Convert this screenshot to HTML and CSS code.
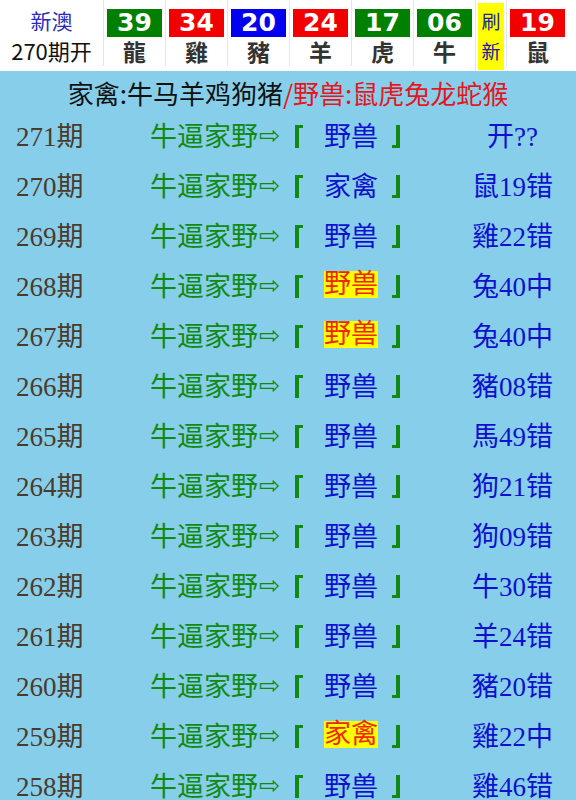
FILE: index.html
```html
<!DOCTYPE html>
<html lang="zh">
<head>
    <meta charset="UTF-8">
    <meta name="viewport" content="width=device-width, initial-scale=1.0">
    <title>新澳 家野</title>
    <link rel="stylesheet" href="styles.css">
</head>
<body>
    <div class="top">
        <div class="lead">
            <div class="lead-name">新澳</div>
            <div class="lead-issue">270期开</div>
        </div>
        <div class="cell"><div class="ball green">39</div><div class="zodiac">龍</div></div>
        <div class="cell"><div class="ball red">34</div><div class="zodiac">雞</div></div>
        <div class="cell"><div class="ball blue">20</div><div class="zodiac">豬</div></div>
        <div class="cell"><div class="ball red">24</div><div class="zodiac">羊</div></div>
        <div class="cell"><div class="ball green">17</div><div class="zodiac">虎</div></div>
        <div class="cell"><div class="ball green">06</div><div class="zodiac">牛</div></div>
        <div class="refresh"><span>刷新</span></div>
        <div class="cell"><div class="ball red">19</div><div class="zodiac">鼠</div></div>
    </div>

    <div class="board">
        <div class="legend">家禽:牛马羊鸡狗猪<span class="wild">/野兽:鼠虎兔龙蛇猴</span></div>

        <div class="row"><span class="period">271期</span><span class="pick">牛逼家野<i class="arrow">⇨</i><i class="lb"></i><b>野兽</b><i class="rb"></i></span><span class="result">开??</span></div>
        <div class="row"><span class="period">270期</span><span class="pick">牛逼家野<i class="arrow">⇨</i><i class="lb"></i><b>家禽</b><i class="rb"></i></span><span class="result">鼠19错</span></div>
        <div class="row"><span class="period">269期</span><span class="pick">牛逼家野<i class="arrow">⇨</i><i class="lb"></i><b>野兽</b><i class="rb"></i></span><span class="result">雞22错</span></div>
        <div class="row"><span class="period">268期</span><span class="pick">牛逼家野<i class="arrow">⇨</i><i class="lb"></i><b class="hit">野兽</b><i class="rb"></i></span><span class="result">兔40中</span></div>
        <div class="row"><span class="period">267期</span><span class="pick">牛逼家野<i class="arrow">⇨</i><i class="lb"></i><b class="hit">野兽</b><i class="rb"></i></span><span class="result">兔40中</span></div>
        <div class="row"><span class="period">266期</span><span class="pick">牛逼家野<i class="arrow">⇨</i><i class="lb"></i><b>野兽</b><i class="rb"></i></span><span class="result">豬08错</span></div>
        <div class="row"><span class="period">265期</span><span class="pick">牛逼家野<i class="arrow">⇨</i><i class="lb"></i><b>野兽</b><i class="rb"></i></span><span class="result">馬49错</span></div>
        <div class="row"><span class="period">264期</span><span class="pick">牛逼家野<i class="arrow">⇨</i><i class="lb"></i><b>野兽</b><i class="rb"></i></span><span class="result">狗21错</span></div>
        <div class="row"><span class="period">263期</span><span class="pick">牛逼家野<i class="arrow">⇨</i><i class="lb"></i><b>野兽</b><i class="rb"></i></span><span class="result">狗09错</span></div>
        <div class="row"><span class="period">262期</span><span class="pick">牛逼家野<i class="arrow">⇨</i><i class="lb"></i><b>野兽</b><i class="rb"></i></span><span class="result">牛30错</span></div>
        <div class="row"><span class="period">261期</span><span class="pick">牛逼家野<i class="arrow">⇨</i><i class="lb"></i><b>野兽</b><i class="rb"></i></span><span class="result">羊24错</span></div>
        <div class="row"><span class="period">260期</span><span class="pick">牛逼家野<i class="arrow">⇨</i><i class="lb"></i><b>野兽</b><i class="rb"></i></span><span class="result">豬20错</span></div>
        <div class="row"><span class="period">259期</span><span class="pick">牛逼家野<i class="arrow">⇨</i><i class="lb"></i><b class="hit">家禽</b><i class="rb"></i></span><span class="result">雞22中</span></div>
        <div class="row"><span class="period">258期</span><span class="pick">牛逼家野<i class="arrow">⇨</i><i class="lb"></i><b>野兽</b><i class="rb"></i></span><span class="result">雞46错</span></div>
    </div>
</body>
</html>
```

FILE: styles.css
```css
body {
    margin: 0;
    background: #87ceeb;
    font-family: "Noto Sans CJK SC", sans-serif;
}
.top {
    display: flex;
    background: #fff;
    height: 71px;
}
.lead {
    width: 103px;
    padding-top: 6px;
    text-align: center;
}
.lead-name {
    color: #2a2ac0;
    font-size: 21px;
    line-height: 29px;
}
.lead-issue {
    color: #111;
    font-size: 22px;
    line-height: 30px;
}
.cell {
    width: 55px;
    padding: 9px 3px 0;
    border-left: 1px solid #e6e6e6;
    height: 57px;
}
.ball {
    height: 28px;
    line-height: 28px;
    color: #fff;
    font-family: "DejaVu Sans", sans-serif;
    font-weight: bold;
    font-size: 25px;
    text-align: center;
}
.green { background: #008000; }
.red { background: #f20000; }
.blue { background: #0000f0; }
.zodiac {
    height: 28px;
    line-height: 28px;
    text-align: center;
    color: #333;
    font-size: 23px;
    font-weight: bold;
}
.refresh {
    width: 30px;
    display: flex;
    justify-content: center;
    border-left: 1px solid #e6e6e6;
}
.refresh span {
    width: 26px;
    height: 67px;
    margin-top: 3px;
    background: #ffff00;
    color: #2020a0;
    font-size: 19px;
    line-height: 30px;
    text-align: center;
    padding-top: 3px;
    box-sizing: border-box;
}
.legend {
    text-align: center;
    font-size: 26px;
    color: #111;
    height: 38px;
    line-height: 44px;
}
.legend .wild {
    color: #e5161c;
}
.row {
    display: flex;
    align-items: center;
    height: 50px;
    font-family: "Liberation Serif", "Noto Sans CJK SC", serif;
    font-size: 27px;
}
.period {
    width: 150px;
    padding-left: 16px;
    box-sizing: border-box;
    color: #4b3b2b;
}
.pick {
    width: 322px;
    display: flex;
    align-items: center;
    color: #128a12;
}
.pick .arrow {
    font-style: normal;
    font-family: "DejaVu Sans", sans-serif;
    font-size: 25px;
    margin: 3px 0 0 1px;
}
.pick .lb,
.pick .rb {
    width: 4px;
    height: 20px;
    margin-top: 4px;
    border: 0 solid #128a12;
}
.pick .lb {
    border-left-width: 4px;
    border-top-width: 3px;
    margin-left: 15px;
}
.pick .rb {
    border-right-width: 4px;
    border-bottom-width: 3px;
    margin-left: 14px;
}
.pick b {
    font-weight: normal;
    color: #1010d0;
    margin-left: 21px;
}
.pick b.hit {
    background: #ffff00;
    color: #f02800;
    line-height: 27px;
}
.result {
    width: 81px;
    text-align: center;
    color: #1010d0;
}
```
